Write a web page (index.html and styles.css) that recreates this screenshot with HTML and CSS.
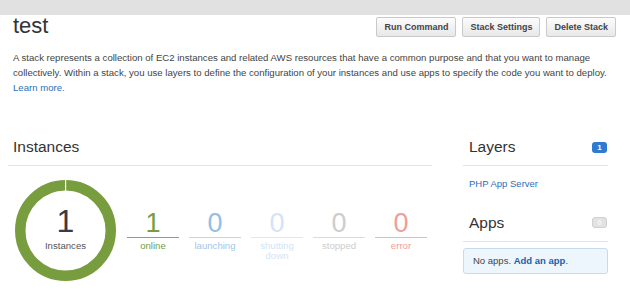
FILE: index.html
```html
<!DOCTYPE html>
<html>
<head>
<meta charset="utf-8">
<link rel="stylesheet" href="styles.css">
</head>
<body>
<div class="topbar"></div>
<div class="header">
  <h1 class="title">test</h1>
  <div class="actions">
    <button class="btn">Run Command</button>
    <button class="btn">Stack Settings</button>
    <button class="btn">Delete Stack</button>
  </div>
</div>
<p class="desc">A stack represents a collection of EC2 instances and related AWS resources that have a common purpose and that you want to manage collectively. Within a stack, you use layers to define the configuration of your instances and use apps to specify the code you want to deploy. <a class="link" href="#">Learn more.</a></p>
<div class="main">
  <section class="instances">
    <h2 class="section-title">Instances</h2>
    <div class="inst-body">
      <div class="donut">
        <svg class="ring" width="101" height="101" viewBox="0 0 101 101">
          <circle cx="50.5" cy="50.5" r="45.25" fill="none" stroke="#789d3e" stroke-width="10.5"/>
          <rect x="50" y="0" width="1.2" height="12" fill="#ffffff"/>
        </svg>
        <div class="donut-center">
          <span class="donut-num">1</span>
          <span class="donut-label">Instances</span>
        </div>
      </div>
      <div class="stats">
        <div class="stat online"><div class="stat-num">1</div><div class="stat-label">online</div></div>
        <div class="stat launching"><div class="stat-num">0</div><div class="stat-label">launching</div></div>
        <div class="stat shutting"><div class="stat-num">0</div><div class="stat-label">shutting<br>down</div></div>
        <div class="stat stopped"><div class="stat-num">0</div><div class="stat-label">stopped</div></div>
        <div class="stat error"><div class="stat-num">0</div><div class="stat-label">error</div></div>
      </div>
    </div>
  </section>
  <aside class="side">
    <div class="side-head">
      <h2 class="side-title">Layers</h2>
      <span class="badge badge-blue">1</span>
    </div>
    <a class="link layer-link" href="#">PHP App Server</a>
    <div class="side-head">
      <h2 class="side-title">Apps</h2>
      <span class="badge badge-gray">0</span>
    </div>
    <div class="notice">No apps. <a class="notice-link" href="#">Add an app</a>.</div>
  </aside>
</div>
</body>
</html>
```
FILE: styles.css
```css
* { box-sizing: border-box; }
body {
  margin: 0;
  font-family: "Liberation Sans", Arial, sans-serif;
  color: #444;
  background: #fff;
}
.topbar {
  height: 15px;
  background: #e1e1e1;
}
.header {
  display: flex;
  justify-content: space-between;
  align-items: flex-start;
  padding: 0 14px 0 13px;
}
.title {
  margin: 0;
  font-size: 22px;
  line-height: 22px;
  font-weight: normal;
  color: #333;
}
.actions {
  display: flex;
  gap: 6px;
  margin-top: 2px;
}
.btn {
  height: 20px;
  padding: 0 7px;
  font: bold 9px "Liberation Sans", Arial, sans-serif;
  color: #444;
  background: linear-gradient(#fcfcfc, #e8e8e8);
  border: 1px solid #c9c9c9;
  border-radius: 2px;
}
.desc {
  margin: 12.5px 14px 0 13px;
  font-size: 9.6px;
  line-height: 15px;
}
.link {
  color: #2f6fba;
  text-decoration: none;
}
.main {
  display: flex;
  margin-top: 42.5px;
  padding-left: 8px;
}
.instances {
  width: 424px;
}
.section-title,
.side-title {
  margin: 0;
  font-size: 15.5px;
  line-height: 20px;
  font-weight: normal;
  color: #333;
}
.section-title {
  padding: 0 5px 8px;
  border-bottom: 1px solid #e4e4e4;
}
.inst-body {
  display: flex;
  align-items: flex-start;
  padding: 14px 0 0 7px;
}
.donut {
  display: grid;
  width: 101px;
  height: 101px;
}
.ring,
.donut-center {
  grid-area: 1 / 1;
}
.donut-center {
  display: flex;
  flex-direction: column;
  align-items: center;
  padding-top: 25px;
}
.donut-num {
  font-size: 32px;
  line-height: 32px;
  color: #3a3a48;
}
.donut-label {
  margin-top: 3px;
  font-size: 9.6px;
  line-height: 12px;
  color: #555;
}
.stats {
  display: flex;
  gap: 10px;
  margin: 29px 0 0 11px;
}
.stat {
  width: 52px;
  text-align: center;
}
.stat-num {
  font-size: 27px;
  line-height: 28px;
  border-bottom: 1px solid;
}
.stat-label {
  padding-top: 3px;
  font-size: 9.6px;
  line-height: 10px;
}
.online { color: #789d3e; }
.online .stat-num { border-color: #8aab55; }
.launching { color: #a3c4e8; }
.launching .stat-num { color: #97bce5; border-color: #bcd5f0; }
.shutting { color: #d4e4f5; }
.shutting .stat-num { border-color: #dde9f6; }
.stopped { color: #cdcdcd; }
.stopped .stat-num { border-color: #dcdcdc; }
.error { color: #ee9f97; }
.error .stat-num { border-color: #f3b5ae; }
.side {
  width: 145px;
  margin-left: 31px;
}
.side-head {
  display: flex;
  justify-content: space-between;
  align-items: center;
  padding: 0 1px 8px 6px;
  border-bottom: 1px solid #e4e4e4;
}
.badge {
  width: 15px;
  height: 11px;
  border-radius: 3px;
  font-size: 8px;
  line-height: 11px;
  font-weight: bold;
  text-align: center;
  color: #fff;
}
.badge-blue {
  background: #2e7bcf;
}
.badge-gray {
  background: #e2e2e2;
  border: 1px solid #d0d0d0;
  line-height: 9px;
  color: #f6f6f6;
}
.layer-link {
  display: block;
  margin: 10px 0 21.5px 6px;
  font-size: 9.5px;
  line-height: 15px;
}
.notice {
  margin-top: 6px;
  height: 26px;
  padding: 0 9px;
  background: #eef6fd;
  border: 1px solid #c6dbf0;
  border-radius: 3px;
  font-size: 9.5px;
  line-height: 24px;
  color: #444;
}
.notice-link {
  color: #1b5fa8;
  font-weight: bold;
  text-decoration: none;
}
```
